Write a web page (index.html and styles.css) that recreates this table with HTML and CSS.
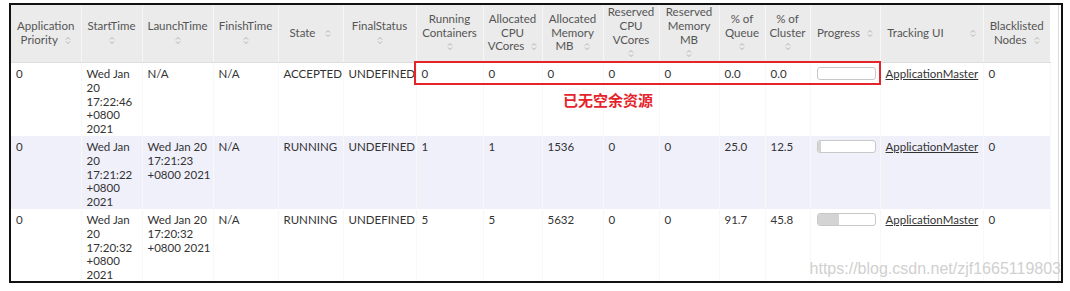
FILE: index.html
```html
<!DOCTYPE html>
<html lang="zh-CN">
<head>
<meta charset="utf-8">
<title>Applications</title>
<link rel="stylesheet" href="styles.css">
</head>
<body>
<div class="frame">
  <div class="tablewrap">
    <table class="apps">
      <colgroup>
        <col style="width:70px"><col style="width:61px"><col style="width:71px"><col style="width:65px">
        <col style="width:65px"><col style="width:73px"><col style="width:67px"><col style="width:59px">
        <col style="width:61px"><col style="width:56px"><col style="width:60px"><col style="width:46px">
        <col style="width:45px"><col style="width:70px"><col style="width:103px"><col style="width:67px">
      </colgroup>
      <thead>
        <tr>
          <th>Application<br>Priority<i class="s"></i></th>
          <th>StartTime<br><i class="s s0"></i></th>
          <th>LaunchTime<br><i class="s s0"></i></th>
          <th>FinishTime<br><i class="s s0"></i></th>
          <th>State<i class="s sw"></i></th>
          <th>FinalStatus<br><i class="s s0"></i></th>
          <th>Running<br>Containers<br><i class="s s0"></i></th>
          <th>Allocated<br>CPU<br>VCores<i class="s"></i></th>
          <th>Allocated<br>Memory<br>MB<i class="s sw"></i></th>
          <th>Reserved<br>CPU<br>VCores<br><i class="s s0"></i></th>
          <th>Reserved<br>Memory<br>MB<br><i class="s s0"></i></th>
          <th>% of<br>Queue<br><i class="s s0"></i></th>
          <th>% of<br>Cluster<br><i class="s s0"></i></th>
          <th>Progress<i class="s"></i></th>
          <th>Tracking UI<i class="s swide"></i></th>
          <th>Blacklisted<br>Nodes<i class="s"></i></th>
        </tr>
      </thead>
      <tbody>
        <tr>
          <td>0</td>
          <td>Wed Jan 20 17:22:46 +0800 2021</td>
          <td>N/A</td>
          <td>N/A</td>
          <td>ACCEPTED</td>
          <td>UNDEFINED</td>
          <td>0</td>
          <td>0</td>
          <td>0</td>
          <td>0</td>
          <td>0</td>
          <td>0.0</td>
          <td>0.0</td>
          <td><div class="bar"><div class="fill" style="width:0%"></div></div></td>
          <td><a href="#">ApplicationMaster</a></td>
          <td>0</td>
        </tr>
        <tr class="odd">
          <td>0</td>
          <td>Wed Jan 20 17:21:22 +0800 2021</td>
          <td>Wed Jan 20 17:21:23 +0800 2021</td>
          <td>N/A</td>
          <td>RUNNING</td>
          <td>UNDEFINED</td>
          <td>1</td>
          <td>1</td>
          <td>1536</td>
          <td>0</td>
          <td>0</td>
          <td>25.0</td>
          <td>12.5</td>
          <td><div class="bar"><div class="fill" style="width:6%"></div></div></td>
          <td><a href="#">ApplicationMaster</a></td>
          <td>0</td>
        </tr>
        <tr>
          <td>0</td>
          <td>Wed Jan 20 17:20:32 +0800 2021</td>
          <td>Wed Jan 20 17:20:32 +0800 2021</td>
          <td>N/A</td>
          <td>RUNNING</td>
          <td>UNDEFINED</td>
          <td>5</td>
          <td>5</td>
          <td>5632</td>
          <td>0</td>
          <td>0</td>
          <td>91.7</td>
          <td>45.8</td>
          <td><div class="bar"><div class="fill" style="width:38%"></div></div></td>
          <td><a href="#">ApplicationMaster</a></td>
          <td>0</td>
        </tr>
      </tbody>
    </table>
    <div class="mark"></div>
    <div class="note">已无空余资源</div>
  </div>
  <div class="edge"></div>
  <div class="watermark">https://blog.csdn.net/zjf1665119803</div>
</div>
</body>
</html>
```
FILE: styles.css
```css
html, body {
  margin: 0;
  padding: 0;
  background: #fff;
}
body {
  font-family: Lato, "Open Sans", sans-serif;
  font-size: 11.5px;
  color: #333;
}
.frame {
  position: relative;
  display: flex;
  margin: 3px 0 0 9px;
  width: 1050px;
  height: 276px;
  border: 2px solid #111;
  overflow: hidden;
}
.tablewrap {
  position: relative;
  width: 1039px;
  flex: none;
}
.edge {
  flex: 1;
  margin-right: 2px;
  border-right: 1px solid #dcdcdc;
}
.apps {
  table-layout: fixed;
  border-collapse: collapse;
  width: 1039px;
}
.apps th {
  background: #ebebeb;
  color: #555;
  font-weight: normal;
  text-align: center;
  vertical-align: middle;
  line-height: 13.6px;
  height: 55px;
  padding: 0 2px 2px;
  border-right: 1px solid #f6f6f6;
  border-bottom: 1px solid #dedede;
}
.apps th:last-child {
  border-right: none;
}
.apps td {
  vertical-align: top;
  line-height: 13.8px;
  height: 69px;
  padding: 4px 2px 0 5px;
  border-right: 1px solid #f8f8f8;
  white-space: normal;
}
.apps tr.odd td {
  background: #f0f0fb;
}
.apps a {
  color: #333;
  text-decoration: underline;
}
.s {
  display: inline-block;
  width: 6px;
  height: 9px;
  margin-left: 7px;
  vertical-align: -1px;
  background:
    url("data:image/svg+xml;utf8,<svg xmlns='http://www.w3.org/2000/svg' width='6' height='9' viewBox='0 0 6 9'><path d='M1 3.5 L3 1.5 L5 3.5 M1 5.5 L3 7.5 L5 5.5' fill='none' stroke='%23aaa' stroke-width='0.9'/></svg>") no-repeat center;
}
.s0 { margin-left: 0; }
.sw { margin-left: 10px; }
.swide { margin-left: 26px; }
.bar {
  width: 57px;
  height: 11px;
  margin: 0 0 0 1px;
  border: 1px solid #c8c8c8;
  border-radius: 3px;
  background: #fff;
  overflow: hidden;
}
.fill {
  height: 100%;
  background: #d4d4d4;
}
.mark {
  position: absolute;
  left: 403px;
  top: 56px;
  width: 463px;
  height: 20px;
  border: 2px solid #e5232b;
}
.note {
  position: absolute;
  left: 552px;
  top: 86px;
  font-family: "Noto Sans CJK SC", sans-serif;
  font-weight: bold;
  font-size: 15px;
  line-height: 18px;
  color: #e5232b;
}
.watermark {
  position: absolute;
  right: 0;
  bottom: 3px;
  font-family: "Liberation Sans", Arial, sans-serif;
  font-size: 16px;
  color: #d0d0d0;
}
```
